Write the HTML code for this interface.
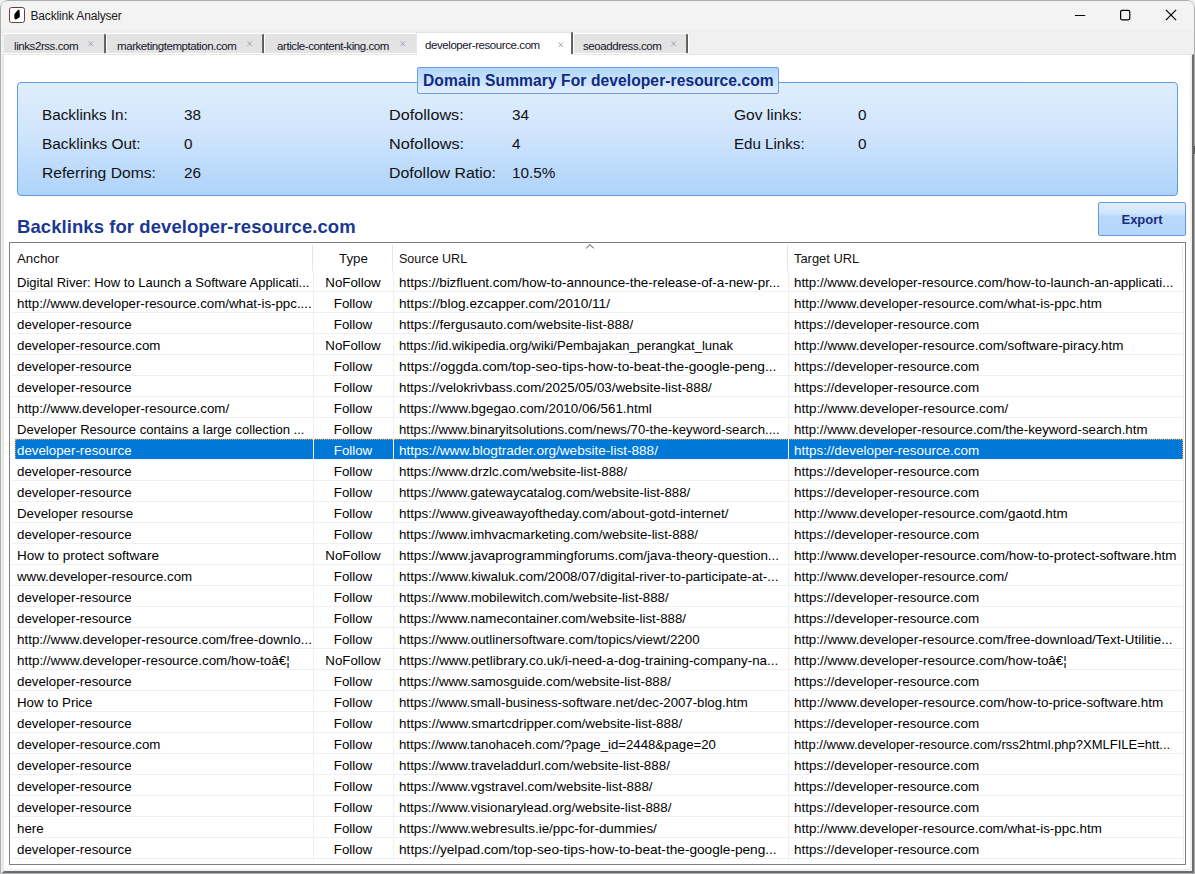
<!DOCTYPE html>
<html><head><meta charset="utf-8"><title>Backlink Analyser</title>
<style>
*{margin:0;padding:0;box-sizing:border-box}
html,body{width:1195px;height:874px;overflow:hidden;background:#f0f0f0;font-family:"Liberation Sans",sans-serif;color:#000}
.abs{position:absolute}
#win{position:absolute;left:0;top:0;width:1195px;height:874px;background:#f0f0f0;border-radius:8px 8px 0 0;overflow:hidden}
#wb{position:absolute;left:0;top:0;width:1195px;height:874px;border:1px solid #acaeb0;border-radius:7px 7px 0 0;pointer-events:none}
#title{position:absolute;left:0;top:0;width:1195px;height:30px;background:#f3f3f3}
#icon{position:absolute;left:9px;top:7px;width:16px;height:16px;border:1.3px solid #5e4038;border-radius:2.5px;background:#fff}
#ttext{position:absolute;left:30.5px;top:8.3px;font-size:12px;line-height:16px;color:#1a1a1a;letter-spacing:-0.17px}
.tab{position:absolute;top:33px;height:21px;background:#e3e3e3;border-top:1px solid #fff;border-bottom:1px solid #fff;font-size:11.5px;line-height:14px;color:#141428;letter-spacing:-0.42px;white-space:nowrap}
.tab .t{position:absolute;top:5px}
.tab .x{position:absolute}
.tab.act{z-index:2;top:32px;height:23px;background:#fff;border-top:1px solid #e3e3e3;border-left:1px solid #e6e6e6;border-bottom:none}
.sep{position:absolute;top:34px;width:2px;height:19px;background:linear-gradient(90deg,#6e6e6e,#555);border-radius:1px 1px 0 0;box-shadow:1px 0 0 #fff}
#pane{position:absolute;left:2px;top:54px;width:1192px;height:819px;background:#fff;border-top:1px solid #e6e6e6;border-left:2px solid #e8e8e8;border-right:2px solid #6c6c6c;border-bottom:2px solid #6c6c6c;box-shadow:inset -2px -2px 0 #f0f0f0}
#gbox{position:absolute;left:17px;top:82px;width:1161px;height:114px;border:1px solid #5f9be2;border-radius:4px;background:linear-gradient(#e0eefd 0%,#d0e5fc 45%,#aed3fa 100%)}
#gtitle{position:absolute;left:417px;top:67px;width:362px;height:27px;border:1px solid #6a9fe2;border-radius:2px;background:linear-gradient(#b2d6fb,#e2effd);font-weight:bold;font-size:15.6px;line-height:25px;color:#102a80;padding-left:5px;white-space:nowrap;letter-spacing:0.08px}
.lab{position:absolute;font-size:15.3px;line-height:18px;color:#111;white-space:nowrap}
#bhead{position:absolute;left:17px;top:216px;font-weight:bold;font-size:18.5px;line-height:22px;color:#1b3890;white-space:nowrap;letter-spacing:0.07px}
#export{position:absolute;left:1098px;top:202px;width:88px;height:34px;border:1px solid #6199e0;border-radius:2px;background:linear-gradient(#e0eefd 0%,#d2e6fc 30%,#b8d9fb 42%,#b3d6fb 100%);font-weight:bold;font-size:13px;line-height:34px;text-align:center;color:#1a2c82;letter-spacing:-0.05px;padding-left:0}
#list{position:absolute;left:9px;top:242px;width:1177px;height:623px;border:1.5px solid #7b808a;background:#fff;overflow:hidden}
#hdr{position:absolute;left:10px;top:243px;width:1174px;height:28px;background:#fff}
.hs{position:absolute;top:245px;width:1px;height:26px;background:#e5e5e5}
.h{position:absolute;top:251px;font-size:13.3px;line-height:16px;color:#111;white-space:nowrap}
.row{position:absolute;left:11px;width:1172px;height:20px;font-size:13.3px;color:#000;white-space:nowrap}
.row span{position:absolute;top:2px;line-height:20px;overflow:hidden}
.row .c1{left:6px;width:296px}
.row .c2{left:302px;width:80px;text-align:center}
.row .c3{left:388px;width:390px}
.row .c4{left:783px;width:389px}
.row.sel{color:#fff}
.line{position:absolute;left:11px;width:1172px;height:1px;background:#f0f0f0}
.selbg{position:absolute;left:15px;width:1168px;height:20px;background:#0078d7;border:1px dotted #f0a030;border-bottom:none}
.vsw{position:absolute;width:1px;height:20px;background:#fff}
.vs{position:absolute;top:271px;width:1px;height:591px;background:#f0f0f0}

.sc{font-style:normal;display:inline-block;transform-origin:0 50%}

</style></head><body>
<div id="win">
 <div id="title">
  <div id="icon"><svg width="14" height="14" viewBox="0 0 14 14" style="position:absolute;left:0;top:0"><path d="M8.9 1.6 L9.5 2.0 L9.8 6.2 L9.8 8.9 L8.6 9.9 L6.5 11.3 L5.2 11.6 L4.3 9.8 L4.5 7.8 L4.0 6.9 L4.9 5.6 L6.5 3.5 L7.8 2.3 Z" fill="#000"/></svg></div>
  <div id="ttext">Backlink Analyser</div>
  <svg class="abs" style="left:1070px;top:5px" width="20" height="20"><line x1="5" y1="10.5" x2="15.2" y2="10.5" stroke="#000" stroke-width="1.2"/></svg>
  <svg class="abs" style="left:1115px;top:5px" width="20" height="20"><rect x="5.6" y="5.4" width="9.2" height="9.4" rx="1.5" fill="none" stroke="#000" stroke-width="1.2"/></svg>
  <svg class="abs" style="left:1161px;top:5px" width="20" height="20"><path d="M4.9 4.9 L15.1 15.1 M15.1 4.9 L4.9 15.1" stroke="#000" stroke-width="1.2"/></svg>
 </div>
 <div class="tab" style="left:4px;width:100px;border-top-left-radius:3px"><span class="t" style="left:10px">links2rss.com</span><svg class="x" width="6" height="6" style="left:84.3px;top:7px"><path d="M0.5 0.5 L5 5 M5 0.5 L0.5 5" stroke="#9090ac" stroke-width="0.85"/></svg></div>
 <div class="sep" style="left:104px"></div>
 <div class="tab" style="left:107px;width:156px"><span class="t" style="left:10px">marketingtemptation.com</span><svg class="x" width="6" height="6" style="left:139.5px;top:7px"><path d="M0.5 0.5 L5 5 M5 0.5 L0.5 5" stroke="#9090ac" stroke-width="0.85"/></svg></div>
 <div class="sep" style="left:262px"></div>
 <div class="tab" style="left:265px;width:151px"><span class="t" style="left:12px">article-content-king.com</span><svg class="x" width="6" height="6" style="left:134.8px;top:7px"><path d="M0.5 0.5 L5 5 M5 0.5 L0.5 5" stroke="#9090ac" stroke-width="0.85"/></svg></div>
 <div class="tab act" style="left:416px;width:155px"><span class="t" style="left:8px;top:5px">developer-resource.com</span><svg class="x" width="6" height="6" style="left:140.8px;top:9px"><path d="M0.5 0.5 L5 5 M5 0.5 L0.5 5" stroke="#9090ac" stroke-width="0.85"/></svg></div>
 <div class="sep" style="left:571px;top:32px;height:22px"></div>
 <div class="tab" style="left:574px;width:112px"><span class="t" style="left:9px">seoaddress.com</span><svg class="x" width="6" height="6" style="left:96.8px;top:7px"><path d="M0.5 0.5 L5 5 M5 0.5 L0.5 5" stroke="#9090ac" stroke-width="0.85"/></svg></div>
 <div class="sep" style="left:686px"></div>
 <div id="pane"></div>
 <div id="gbox"></div>
 <div id="gtitle">Domain Summary For developer-resource.com</div>
 <div class="lab" style="left:42px;top:106px"><i class="sc" style="transform:scaleX(1.0000)">Backlinks In:</i></div>
 <div class="lab" style="left:184px;top:106px"><i class="sc" style="transform:scaleX(1.0000)">38</i></div>
 <div class="lab" style="left:42px;top:135px"><i class="sc" style="transform:scaleX(1.0084)">Backlinks Out:</i></div>
 <div class="lab" style="left:184px;top:135px"><i class="sc" style="transform:scaleX(1.0000)">0</i></div>
 <div class="lab" style="left:42px;top:164px"><i class="sc" style="transform:scaleX(1.0220)">Referring Doms:</i></div>
 <div class="lab" style="left:184px;top:164px"><i class="sc" style="transform:scaleX(1.0000)">26</i></div>
 <div class="lab" style="left:389px;top:106px"><i class="sc" style="transform:scaleX(1.0588)">Dofollows:</i></div>
 <div class="lab" style="left:512px;top:106px"><i class="sc" style="transform:scaleX(1.0000)">34</i></div>
 <div class="lab" style="left:389px;top:135px"><i class="sc" style="transform:scaleX(1.0648)">Nofollows:</i></div>
 <div class="lab" style="left:512px;top:135px"><i class="sc" style="transform:scaleX(1.0000)">4</i></div>
 <div class="lab" style="left:389px;top:164px"><i class="sc" style="transform:scaleX(1.0401)">Dofollow Ratio:</i></div>
 <div class="lab" style="left:512px;top:164px"><i class="sc" style="transform:scaleX(1.0000)">10.5%</i></div>
 <div class="lab" style="left:734px;top:106px"><i class="sc" style="transform:scaleX(1.0154)">Gov links:</i></div>
 <div class="lab" style="left:858px;top:106px"><i class="sc" style="transform:scaleX(1.0000)">0</i></div>
 <div class="lab" style="left:734px;top:135px"><i class="sc" style="transform:scaleX(0.9884)">Edu Links:</i></div>
 <div class="lab" style="left:858px;top:135px"><i class="sc" style="transform:scaleX(1.0000)">0</i></div>
 <div id="bhead">Backlinks for developer-resource.com</div>
 <div id="export">Export</div>
 <div id="list"></div>
 <div class="hs" style="left:312px"></div>
 <div class="hs" style="left:392px"></div>
 <div class="hs" style="left:787px"></div>
 <div class="hs" style="left:1182px"></div>
 <div class="h" style="left:17px">Anchor</div>
 <div class="h" style="left:339px">Type</div>
 <div class="h" style="left:399px"><i class="sc" style="transform:scaleX(0.94)">Source URL</i></div>
 <div class="h" style="left:794px"><i class="sc" style="transform:scaleX(0.97)">Target URL</i></div>
 <svg class="abs" style="left:585px;top:243px" width="10" height="7"><path d="M1.2 5.4 L5 1.6 L8.8 5.4" fill="none" stroke="#444" stroke-width="1"/></svg>
<div class="line" style="top:291px"></div>
<div class="row" style="top:271px"><span class="c1"><i class="sc" style="transform:scaleX(0.9770)">Digital River: How to Launch a Software Applicati...</i></span><span class="c2">NoFollow</span><span class="c3"><i class="sc" style="transform:scaleX(1.0069)">https://bizfluent.com/how-to-announce-the-release-of-a-new-pr...</i></span><span class="c4"><i class="sc" style="transform:scaleX(1.0005)">http://www.developer-resource.com/how-to-launch-an-applicati...</i></span></div>
<div class="line" style="top:312px"></div>
<div class="row" style="top:292px"><span class="c1"><i class="sc" style="transform:scaleX(0.9993)">http://www.developer-resource.com/what-is-ppc....</i></span><span class="c2">Follow</span><span class="c3"><i class="sc" style="transform:scaleX(1.0239)">https://blog.ezcapper.com/2010/11/</i></span><span class="c4"><i class="sc" style="transform:scaleX(1.0063)">http://www.developer-resource.com/what-is-ppc.htm</i></span></div>
<div class="line" style="top:333px"></div>
<div class="row" style="top:313px"><span class="c1">developer-resource</span><span class="c2">Follow</span><span class="c3"><i class="sc" style="transform:scaleX(1.0126)">https://fergusauto.com/website-list-888/</i></span><span class="c4"><i class="sc" style="transform:scaleX(1.0105)">https://developer-resource.com</i></span></div>
<div class="line" style="top:354px"></div>
<div class="row" style="top:334px"><span class="c1">developer-resource.com</span><span class="c2">NoFollow</span><span class="c3"><i class="sc" style="transform:scaleX(0.9805)">https://id.wikipedia.org/wiki/Pembajakan_perangkat_lunak</i></span><span class="c4"><i class="sc" style="transform:scaleX(1.0068)">http://www.developer-resource.com/software-piracy.htm</i></span></div>
<div class="line" style="top:375px"></div>
<div class="row" style="top:355px"><span class="c1">developer-resource</span><span class="c2">Follow</span><span class="c3"><i class="sc" style="transform:scaleX(1.0316)">https://oggda.com/top-seo-tips-how-to-beat-the-google-peng...</i></span><span class="c4"><i class="sc" style="transform:scaleX(1.0105)">https://developer-resource.com</i></span></div>
<div class="line" style="top:396px"></div>
<div class="row" style="top:376px"><span class="c1">developer-resource</span><span class="c2">Follow</span><span class="c3"><i class="sc" style="transform:scaleX(1.0029)">https://velokrivbass.com/2025/05/03/website-list-888/</i></span><span class="c4"><i class="sc" style="transform:scaleX(1.0105)">https://developer-resource.com</i></span></div>
<div class="line" style="top:417px"></div>
<div class="row" style="top:397px"><span class="c1">http://www.developer-resource.com/</span><span class="c2">Follow</span><span class="c3"><i class="sc" style="transform:scaleX(1.0060)">https://www.bgegao.com/2010/06/561.html</i></span><span class="c4"><i class="sc" style="transform:scaleX(1.0095)">http://www.developer-resource.com/</i></span></div>
<div class="line" style="top:438px"></div>
<div class="row" style="top:418px"><span class="c1"><i class="sc" style="transform:scaleX(0.9821)">Developer Resource contains a large collection ...</i></span><span class="c2">Follow</span><span class="c3"><i class="sc" style="transform:scaleX(0.9885)">https://www.binaryitsolutions.com/news/70-the-keyword-search....</i></span><span class="c4"><i class="sc" style="transform:scaleX(0.9963)">http://www.developer-resource.com/the-keyword-search.htm</i></span></div>
<div class="line" style="top:459px"></div>
<div class="selbg" style="top:439px"></div>
<div class="row sel" style="top:439px"><span class="c1">developer-resource</span><span class="c2">Follow</span><span class="c3"><i class="sc" style="transform:scaleX(1.0214)">https://www.blogtrader.org/website-list-888/</i></span><span class="c4"><i class="sc" style="transform:scaleX(1.0105)">https://developer-resource.com</i></span></div>
<div class="line" style="top:480px"></div>
<div class="row" style="top:460px"><span class="c1">developer-resource</span><span class="c2">Follow</span><span class="c3"><i class="sc" style="transform:scaleX(0.9991)">https://www.drzlc.com/website-list-888/</i></span><span class="c4"><i class="sc" style="transform:scaleX(1.0105)">https://developer-resource.com</i></span></div>
<div class="line" style="top:501px"></div>
<div class="row" style="top:481px"><span class="c1">developer-resource</span><span class="c2">Follow</span><span class="c3"><i class="sc" style="transform:scaleX(0.9949)">https://www.gatewaycatalog.com/website-list-888/</i></span><span class="c4"><i class="sc" style="transform:scaleX(1.0105)">https://developer-resource.com</i></span></div>
<div class="line" style="top:522px"></div>
<div class="row" style="top:502px"><span class="c1">Developer resourse</span><span class="c2">Follow</span><span class="c3"><i class="sc" style="transform:scaleX(1.0117)">https://www.giveawayoftheday.com/about-gotd-internet/</i></span><span class="c4"><i class="sc" style="transform:scaleX(1.0089)">http://www.developer-resource.com/gaotd.htm</i></span></div>
<div class="line" style="top:543px"></div>
<div class="row" style="top:523px"><span class="c1">developer-resource</span><span class="c2">Follow</span><span class="c3"><i class="sc" style="transform:scaleX(0.9940)">https://www.imhvacmarketing.com/website-list-888/</i></span><span class="c4"><i class="sc" style="transform:scaleX(1.0105)">https://developer-resource.com</i></span></div>
<div class="line" style="top:564px"></div>
<div class="row" style="top:544px"><span class="c1"><i class="sc" style="transform:scaleX(1.0159)">How to protect software</i></span><span class="c2">NoFollow</span><span class="c3"><i class="sc" style="transform:scaleX(1.0021)">https://www.javaprogrammingforums.com/java-theory-question...</i></span><span class="c4"><i class="sc" style="transform:scaleX(1.0128)">http://www.developer-resource.com/how-to-protect-software.htm</i></span></div>
<div class="line" style="top:585px"></div>
<div class="row" style="top:565px"><span class="c1">www.developer-resource.com</span><span class="c2">Follow</span><span class="c3"><i class="sc" style="transform:scaleX(1.0067)">https://www.kiwaluk.com/2008/07/digital-river-to-participate-at-...</i></span><span class="c4"><i class="sc" style="transform:scaleX(1.0085)">http://www.developer-resource.com/</i></span></div>
<div class="line" style="top:606px"></div>
<div class="row" style="top:586px"><span class="c1">developer-resource</span><span class="c2">Follow</span><span class="c3"><i class="sc" style="transform:scaleX(0.9996)">https://www.mobilewitch.com/website-list-888/</i></span><span class="c4"><i class="sc" style="transform:scaleX(1.0105)">https://developer-resource.com</i></span></div>
<div class="line" style="top:627px"></div>
<div class="row" style="top:607px"><span class="c1">developer-resource</span><span class="c2">Follow</span><span class="c3"><i class="sc" style="transform:scaleX(0.9983)">https://www.namecontainer.com/website-list-888/</i></span><span class="c4"><i class="sc" style="transform:scaleX(1.0105)">https://developer-resource.com</i></span></div>
<div class="line" style="top:648px"></div>
<div class="row" style="top:628px"><span class="c1"><i class="sc" style="transform:scaleX(1.0076)">http://www.developer-resource.com/free-downlo...</i></span><span class="c2">Follow</span><span class="c3"><i class="sc" style="transform:scaleX(1.0017)">https://www.outlinersoftware.com/topics/viewt/2200</i></span><span class="c4"><i class="sc" style="transform:scaleX(1.0059)">http://www.developer-resource.com/free-download/Text-Utilitie...</i></span></div>
<div class="line" style="top:669px"></div>
<div class="row" style="top:649px"><span class="c1"><i class="sc" style="transform:scaleX(1.0090)">http://www.developer-resource.com/how-toâ€¦</i></span><span class="c2">NoFollow</span><span class="c3"><i class="sc" style="transform:scaleX(1.0067)">https://www.petlibrary.co.uk/i-need-a-dog-training-company-na...</i></span><span class="c4"><i class="sc" style="transform:scaleX(1.0093)">http://www.developer-resource.com/how-toâ€¦</i></span></div>
<div class="line" style="top:690px"></div>
<div class="row" style="top:670px"><span class="c1">developer-resource</span><span class="c2">Follow</span><span class="c3"><i class="sc" style="transform:scaleX(0.9996)">https://www.samosguide.com/website-list-888/</i></span><span class="c4"><i class="sc" style="transform:scaleX(1.0105)">https://developer-resource.com</i></span></div>
<div class="line" style="top:711px"></div>
<div class="row" style="top:691px"><span class="c1">How to Price</span><span class="c2">Follow</span><span class="c3"><i class="sc" style="transform:scaleX(0.9934)">https://www.small-business-software.net/dec-2007-blog.htm</i></span><span class="c4"><i class="sc" style="transform:scaleX(1.0093)">http://www.developer-resource.com/how-to-price-software.htm</i></span></div>
<div class="line" style="top:732px"></div>
<div class="row" style="top:712px"><span class="c1">developer-resource</span><span class="c2">Follow</span><span class="c3"><i class="sc" style="transform:scaleX(1.0086)">https://www.smartcdripper.com/website-list-888/</i></span><span class="c4"><i class="sc" style="transform:scaleX(1.0105)">https://developer-resource.com</i></span></div>
<div class="line" style="top:753px"></div>
<div class="row" style="top:733px"><span class="c1">developer-resource.com</span><span class="c2">Follow</span><span class="c3"><i class="sc" style="transform:scaleX(0.9921)">https://www.tanohaceh.com/?page_id=2448&amp;page=20</i></span><span class="c4"><i class="sc" style="transform:scaleX(0.9778)">http://www.developer-resource.com/rss2html.php?XMLFILE=htt...</i></span></div>
<div class="line" style="top:774px"></div>
<div class="row" style="top:754px"><span class="c1">developer-resource</span><span class="c2">Follow</span><span class="c3"><i class="sc" style="transform:scaleX(1.0041)">https://www.traveladdurl.com/website-list-888/</i></span><span class="c4"><i class="sc" style="transform:scaleX(1.0105)">https://developer-resource.com</i></span></div>
<div class="line" style="top:795px"></div>
<div class="row" style="top:775px"><span class="c1">developer-resource</span><span class="c2">Follow</span><span class="c3"><i class="sc" style="transform:scaleX(1.0000)">https://www.vgstravel.com/website-list-888/</i></span><span class="c4"><i class="sc" style="transform:scaleX(1.0105)">https://developer-resource.com</i></span></div>
<div class="line" style="top:816px"></div>
<div class="row" style="top:796px"><span class="c1">developer-resource</span><span class="c2">Follow</span><span class="c3"><i class="sc" style="transform:scaleX(1.0015)">https://www.visionarylead.org/website-list-888/</i></span><span class="c4"><i class="sc" style="transform:scaleX(1.0105)">https://developer-resource.com</i></span></div>
<div class="line" style="top:837px"></div>
<div class="row" style="top:817px"><span class="c1">here</span><span class="c2">Follow</span><span class="c3"><i class="sc" style="transform:scaleX(1.0055)">https://www.webresults.ie/ppc-for-dummies/</i></span><span class="c4"><i class="sc" style="transform:scaleX(1.0063)">http://www.developer-resource.com/what-is-ppc.htm</i></span></div>
<div class="line" style="top:858px"></div>
<div class="row" style="top:838px"><span class="c1">developer-resource</span><span class="c2">Follow</span><span class="c3"><i class="sc" style="transform:scaleX(1.0260)">https://yelpad.com/top-seo-tips-how-to-beat-the-google-peng...</i></span><span class="c4"><i class="sc" style="transform:scaleX(1.0105)">https://developer-resource.com</i></span></div>
<div class="vs" style="left:313px"></div><div class="vs" style="left:393px"></div><div class="vs" style="left:788px"></div><div class="vs" style="left:1183px"></div>
<div class="vsw" style="left:313px;top:439px"></div><div class="vsw" style="left:393px;top:439px"></div><div class="vsw" style="left:788px;top:439px"></div>
 <div id="wb"></div>
 <div class="abs" style="left:1194px;top:146px;width:1px;height:8px;background:#5a5a5a"></div>
</div>

</body></html>
